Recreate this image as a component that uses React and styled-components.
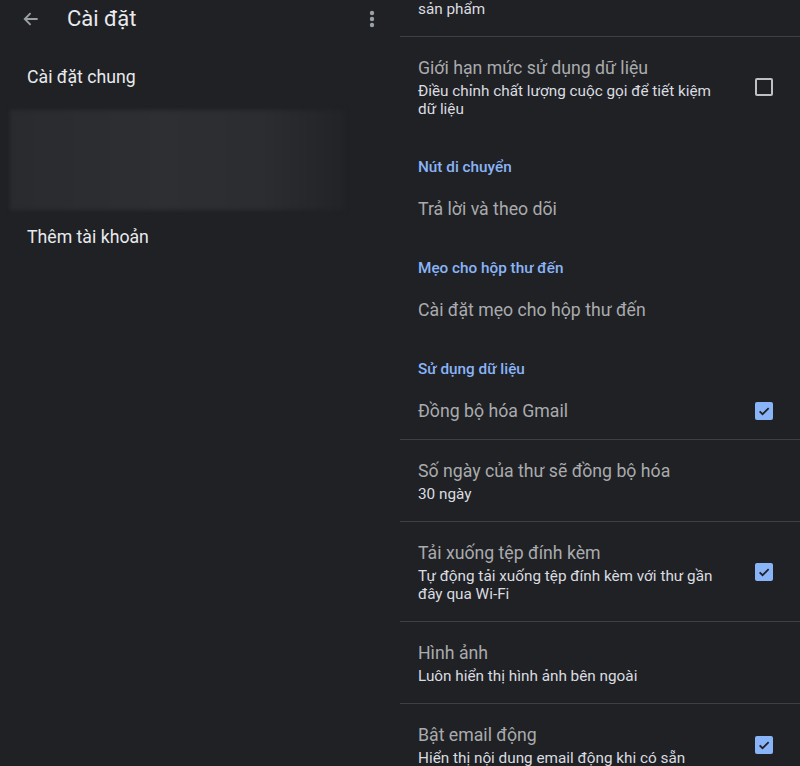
import React from "react";
import styled, { createGlobalStyle } from "styled-components";

const GlobalStyle = createGlobalStyle`
    html, body {
        margin: 0;
        padding: 0;
        background: #202124;
        overflow: hidden;
    }
    body {
        font-family: Roboto, "Noto Sans", "Liberation Sans", sans-serif;
    }
`;

const Screen = styled.div`
    display: flex;
    width: 800px;
    height: 766px;
    background: #202124;
    overflow: hidden;
`;

const LeftPane = styled.div`
    width: 400px;
    flex-shrink: 0;
    display: flex;
    flex-direction: column;
`;

const Toolbar = styled.div`
    height: 38px;
    display: flex;
    align-items: center;
    padding: 0 17px 0 20px;
`;

const IconButton = styled.div`
    width: 22px;
    height: 22px;
    display: flex;
    align-items: center;
    justify-content: center;
    color: #9aa0a6;
`;

const Title = styled.div`
    flex: 1;
    margin-left: 25px;
    color: #e8eaed;
    font-size: 22px;
    line-height: 28px;
`;

const NavItem = styled.div`
    height: ${(p) => p.h}px;
    margin-top: ${(p) => p.mt || 0}px;
    display: flex;
    align-items: center;
    padding-left: 27px;
    color: #e8eaed;
    font-size: 17.7px;
`;

const Blurred = styled.div`
    margin-left: 10px;
    width: 335px;
    height: 100px;
    background: linear-gradient(90deg, #2a2b2f 0%, #2e2f33 45%, #2c2d31 75%, #222326 100%);
    filter: blur(2px);
`;

const RightPane = styled.div`
    flex: 1;
    overflow: hidden;
`;

const List = styled.div`
    margin-top: -63px;
`;

const Row = styled.div`
    display: flex;
    align-items: center;
    padding: ${(p) => (p.single ? "16px" : "19px")} 27px ${(p) => (p.single ? "16px" : "18px")} 18px;
    border-top: ${(p) => (p.divider ? "1px solid #3c4043" : "none")};
`;

const RowText = styled.div`
    flex: 1;
    padding-right: 20px;
    white-space: nowrap;
`;

const RowTitle = styled.div`
    color: #a9abae;
    font-size: 17.7px;
    line-height: 24px;
`;

const RowSummary = styled.div`
    margin-top: 2px;
    color: #dadce0;
    font-size: 15.3px;
    line-height: 18px;
`;

const SectionHeader = styled.div`
    padding: 21px 18px 4px;
    color: #8ab4f8;
    font-size: 15.3px;
    font-weight: 500;
    line-height: 20px;
`;

const Box = styled.div`
    width: 18px;
    height: 18px;
    box-sizing: border-box;
    border-radius: 2px;
    flex-shrink: 0;
    display: flex;
    align-items: center;
    justify-content: center;
    border: ${(p) => (p.checked ? "none" : "2px solid #bdc1c6")};
    background: ${(p) => (p.checked ? "#8ab4f8" : "transparent")};
`;

const Checkbox = ({ checked }) => (
    <Box checked={checked}>
        {checked && (
            <svg width="14" height="14" viewBox="0 0 24 24">
                <path d="M4.5 12.5l5 5L20 7" fill="none" stroke="#202124" strokeWidth="3" />
            </svg>
        )}
    </Box>
);

const Item = ({ title, summary, checked, divider }) => (
    <Row divider={divider} single={!summary}>
        <RowText>
            <RowTitle>{title}</RowTitle>
            {summary && <RowSummary>{summary}</RowSummary>}
        </RowText>
        {checked !== undefined && <Checkbox checked={checked} />}
    </Row>
);

const App = () => {
    return (
        <>
            <GlobalStyle />
            <Screen>
                <LeftPane>
                    <Toolbar>
                        <IconButton>
                            <svg width="20" height="20" viewBox="0 0 24 24">
                                <path d="M20 12H5M11.5 5L4.5 12l7 7" fill="none" stroke="currentColor" strokeWidth="2.2" />
                            </svg>
                        </IconButton>
                        <Title>Cài đặt</Title>
                        <IconButton>
                            <svg width="6" height="20" viewBox="0 0 6 20">
                                <circle cx="3" cy="4" r="2.2" fill="currentColor" />
                                <circle cx="3" cy="10" r="2.2" fill="currentColor" />
                                <circle cx="3" cy="16" r="2.2" fill="currentColor" />
                            </svg>
                        </IconButton>
                    </Toolbar>
                    <NavItem mt={6} h={66}>Cài đặt chung</NavItem>
                    <Blurred />
                    <NavItem h={54}>Thêm tài khoản</NavItem>
                </LeftPane>
                <RightPane>
                    <List>
                        <Item
                            title="Giúp cải thiện Gmail"
                            summary={<>Gửi dữ liệu sử dụng để giúp cải thiện<br />sản phẩm</>}
                        />
                        <Item
                            divider
                            title="Giới hạn mức sử dụng dữ liệu"
                            summary={<>Điều chỉnh chất lượng cuộc gọi để tiết kiệm<br />dữ liệu</>}
                            checked={false}
                        />
                        <SectionHeader>Nút di chuyển</SectionHeader>
                        <Item title="Trả lời và theo dõi" />
                        <SectionHeader>Mẹo cho hộp thư đến</SectionHeader>
                        <Item title="Cài đặt mẹo cho hộp thư đến" />
                        <SectionHeader>Sử dụng dữ liệu</SectionHeader>
                        <Item title="Đồng bộ hóa Gmail" checked={true} />
                        <Item divider title="Số ngày của thư sẽ đồng bộ hóa" summary="30 ngày" />
                        <Item
                            divider
                            title="Tải xuống tệp đính kèm"
                            summary={<>Tự động tải xuống tệp đính kèm với thư gần<br />đây qua Wi-Fi</>}
                            checked={true}
                        />
                        <Item divider title="Hình ảnh" summary="Luôn hiển thị hình ảnh bên ngoài" />
                        <Item
                            divider
                            title="Bật email động"
                            summary="Hiển thị nội dung email động khi có sẵn"
                            checked={true}
                        />
                    </List>
                </RightPane>
            </Screen>
        </>
    );
};

export default App;
